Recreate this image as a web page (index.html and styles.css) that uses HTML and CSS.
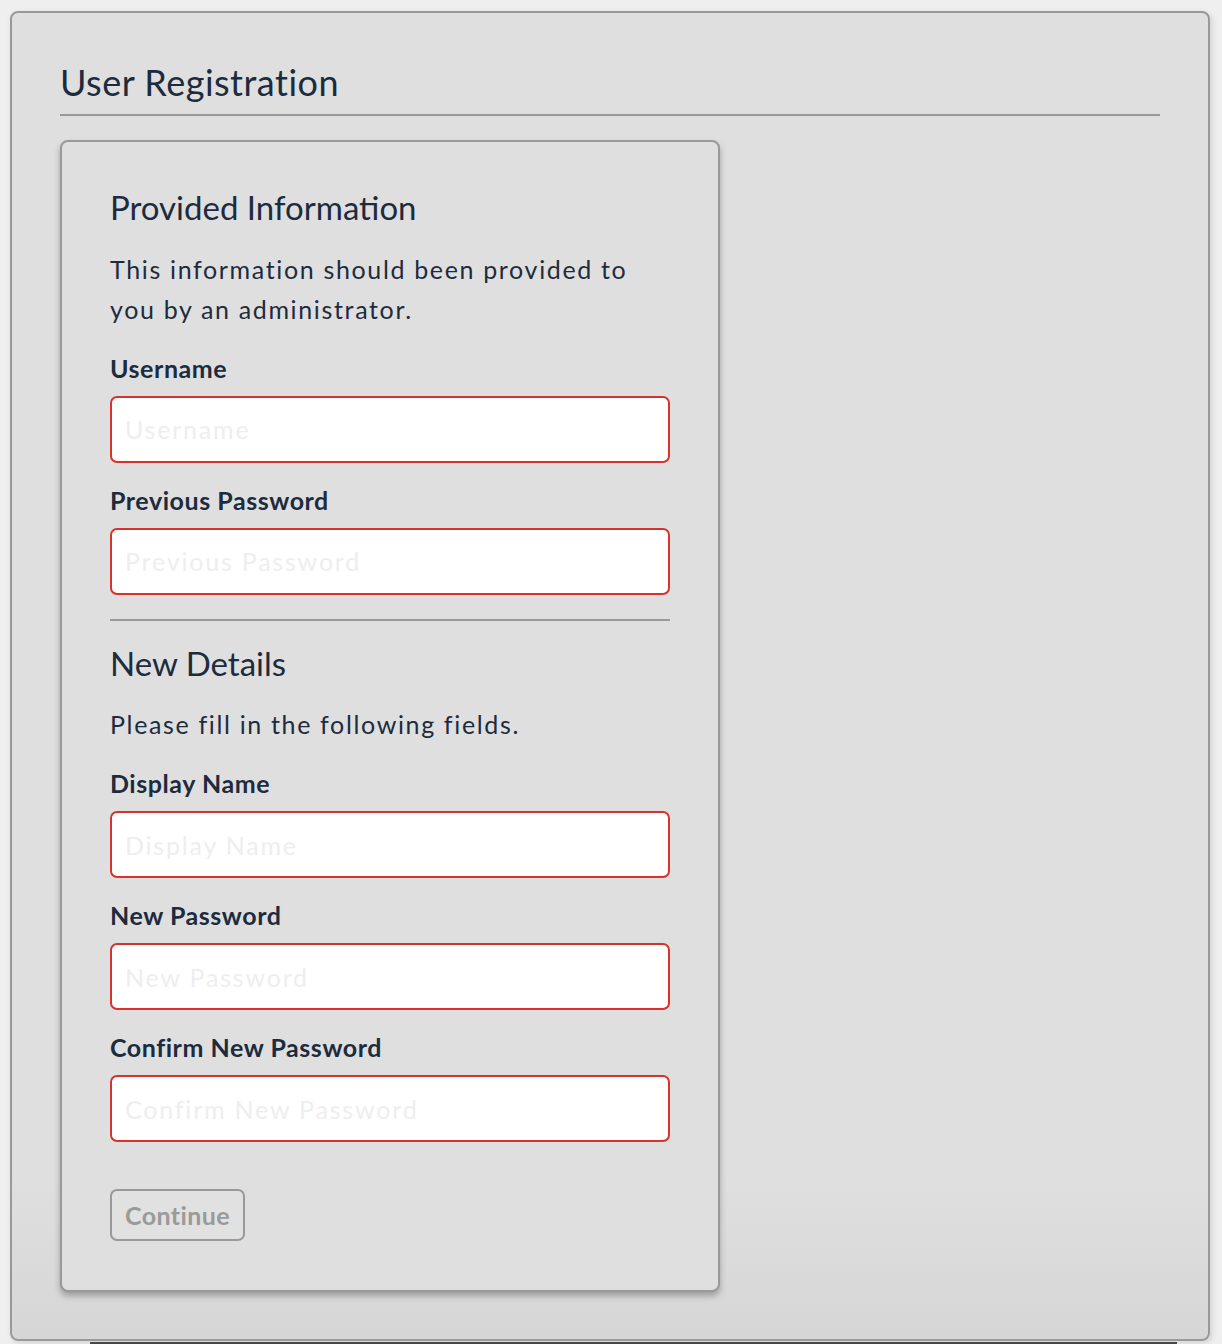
FILE: index.html
```html
<!DOCTYPE html>
<html lang="en">
<head>
<meta charset="utf-8">
<title>User Registration</title>
<link rel="stylesheet" href="styles.css">
</head>
<body>
<div class="panel">
  <h1 class="page-title">User Registration</h1>
  <form class="card">
    <h2 class="section-title">Provided Information</h2>
    <p class="section-text">This information should been provided to you by an administrator.</p>
    <div class="field">
      <label class="field-label" for="username">Username</label>
      <input class="field-input" id="username" type="text" placeholder="Username">
    </div>
    <div class="field">
      <label class="field-label" for="prev">Previous Password</label>
      <input class="field-input" id="prev" type="password" placeholder="Previous Password">
    </div>
    <hr class="divider">
    <h2 class="section-title">New Details</h2>
    <p class="section-text">Please fill in the following fields.</p>
    <div class="field">
      <label class="field-label" for="display">Display Name</label>
      <input class="field-input" id="display" type="text" placeholder="Display Name">
    </div>
    <div class="field">
      <label class="field-label" for="newpw">New Password</label>
      <input class="field-input" id="newpw" type="password" placeholder="New Password">
    </div>
    <div class="field">
      <label class="field-label" for="confirm">Confirm New Password</label>
      <input class="field-input" id="confirm" type="password" placeholder="Confirm New Password">
    </div>
    <button class="btn-continue" type="button" disabled>Continue</button>
  </form>
</div>
<div class="bottom-strip"></div>
</body>
</html>
```
FILE: styles.css
```css
html, body {
  margin: 0;
  padding: 0;
}
body {
  background: #efefef;
  font-family: Lato, "Noto Sans", sans-serif;
  color: #1d2b3e;
}
.panel {
  box-sizing: border-box;
  width: 1200px;
  margin: 11px 0 0 10px;
  border: 2px solid #999;
  border-radius: 8px;
  background: linear-gradient(#dfdfdf 0%, #dfdfdf 88%, #d6d6d6 100%);
  padding: 48px 48px 47px;
  box-shadow: 2px 2px 6px rgba(0, 0, 0, 0.12);
}
.page-title {
  margin: 0;
  font-size: 36px;
  font-weight: 400;
  line-height: 1.2;
  padding-bottom: 10px;
  border-bottom: 2px solid #999;
  letter-spacing: 0.5px;
}
.card {
  box-sizing: border-box;
  width: 660px;
  margin-top: 24px;
  border: 2px solid #999;
  border-radius: 8px;
  padding: 46px 48px 49px;
  background: #dfdfdf;
  box-shadow: 0 4px 6px rgba(0, 0, 0, 0.28);
}
.section-title {
  margin: 0;
  font-size: 33px;
  font-weight: 400;
  line-height: 1.2;
  letter-spacing: 0;
}
.section-text {
  margin: 21px 0 0;
  font-size: 25px;
  line-height: 40px;
  letter-spacing: 1.65px;
}
.field {
  margin-top: 22px;
}
.section-text + .field {
  margin-top: 24px;
}
.field-label {
  display: block;
  font-size: 25px;
  font-weight: 700;
  line-height: 30px;
  margin-bottom: 13px;
  letter-spacing: 0.55px;
}
.field-input {
  display: block;
  box-sizing: border-box;
  width: 100%;
  height: 67px;
  border: 2px solid #d8322b;
  border-radius: 7px;
  background: #fff;
  padding: 0 13px;
  font-family: Lato, "Noto Sans", sans-serif;
  font-size: 25px;
  letter-spacing: 1.8px;
  color: #1d2b3e;
  outline: none;
}
.field-input::placeholder {
  color: #eeeeee;
}
.divider {
  margin: 24px 0 23px;
  border: 0;
  border-top: 2px solid #999;
  height: 0;
}
.btn-continue {
  display: block;
  margin-top: 47px;
  height: 52px;
  padding: 0 13px;
  border: 2px solid #999;
  border-radius: 7px;
  background: #e1e1e1;
  color: #9a9a9a;
  font-family: Lato, "Noto Sans", sans-serif;
  font-size: 25px;
  font-weight: 700;
  letter-spacing: 0.4px;
}
.bottom-strip {
  height: 3px;
  margin: 1px 45px 0 90px;
  background: #474747;
}
```
